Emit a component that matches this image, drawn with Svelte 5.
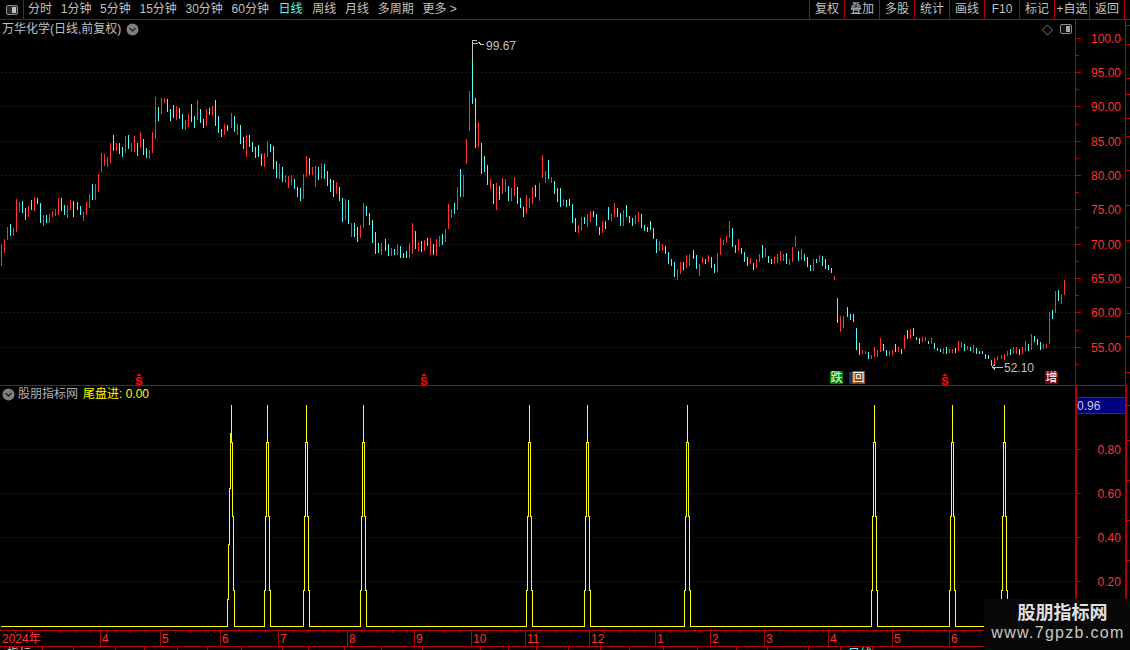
<script>
  const seg6 = "4 463 527 r,13 447 488 r,22 411 450 r,31 402 438 c,40 414 438 r,49 327 426 r,58 336 366 r,67 333 369 c,76 354 390 c,85 348 381 r,94 330 360 c,103 321 363 r,112 324 342 c,121 339 399 c,130 375 408 r,139 375 400 c,148 372 399 r,157 363 381 r,166 357 378 r,175 324 375 r,184 324 363 c,193 345 375 c,202 345 384 r,211 330 360 r,220 333 381 c,232 336 360 c,241 348 375 c,250 366 393 r,259 336 375 r,268 312 354 r,277 282 330 c,286 282 330 r,295 252 306 r,304 189 246 r,313 192 228 r,322 201 231 r,331 159 219 r,340 135 183 c,349 159 183 r,358 159 192 c,367 171 201 c,376 138 189 r,385 135 177 c,394 159 186 r,403 138 186 r,412 159 198 c,421 126 174 r,430 147 195 c,439 174 204 c,448 180 207 r,457 126 189 r,466 21 147 r,475 51 93 c,484 24 72 r,493 24 39 r,502 27 66 c,511 57 93 c,520 45 84 c,529 48 90 r,538 54 87 c,547 72 117 c,556 90 120 r,565 72 111 r,574 42 96 c,583 78 114 c,592 30 90 r,601 57 99 c,610 87 114 c,619 57 108 r,628 54 75 c,637 48 78 r,646 30 108 c,655 78 129 c,664 117 141 c,673 102 135 r,682 105 123 c,694 69 114 r,703 78 126 c,712 102 135 r";
  const seg7 = "1 285 342 c,10 321 357 c,19 315 381 r,28 315 351 c,37 336 366 c,46 351 384 c,55 345 381 c,64 372 408 c,73 369 411 r,82 333 381 r,91 342 366 c,100 348 417 c,109 393 444 c,118 402 447 r,127 411 456 c,136 435 459 r,145 438 474 r,154 435 465 r,163 447 477 c,172 471 501 c,181 474 513 c,190 432 507 r,199 378 441 r,208 384 435 c,217 411 435 r,226 408 471 r,235 411 450 c,244 399 447 r,253 402 447 c,262 423 468 c,271 447 486 c,280 450 501 c,289 456 492 r,298 471 513 c,307 504 576 c,316 507 570 r,325 510 582 c,334 579 621 r,343 579 621 c,352 591 636 c,361 585 624 r,370 519 594 r,379 528 558 c,388 549 585 c,397 570 639 c,406 606 672 c,415 639 669 c,424 639 675 r,436 627 663 c,445 642 678 c,454 654 678 r,463 657 675 c,472 642 675 r,481 648 684 c,490 669 684 c,499 663 684 c,508 639 684 r,517 579 672 r,526 603 657 c,535 636 663 r,544 633 666 c,553 630 663 r,562 624 648 c,571 624 675 r,580 642 675 c,589 627 678 r,598 618 651 r,607 612 645 c,616 597 636 r,625 522 597 r,634 537 564 r,643 519 552 c,652 471 540 r,661 417 501 c,670 435 501 r,679 327 402 r,688 183 303 r,697 30 222 c,706 204 354 c,715 276 351 r,724 339 432 c,733 378 426 c,742 405 465 c,751 447 477 r,760 462 522 c,769 459 540 r,778 468 510 c,787 444 492 r,796 447 486 r,805 468 513 c,814 474 513 r,823 441 498 r,832 471 522 c,841 504 534 c,850 531 561 c,859 495 552 r,868 504 534 r,877 471 522 r,886 465 501 c,898 459 513 r";
  const seg8 = "7 45 114 r,16 93 129 r,25 60 117 c,34 111 129 r,43 123 162 c,52 144 186 c,61 144 201 c,70 177 198 r,79 180 201 c,88 177 198 c,97 192 249 c,106 234 276 c,115 255 279 r,124 231 273 r,133 231 252 c,142 222 261 r,151 213 246 r,160 213 231 c,169 222 258 c,178 261 285 c,187 243 279 r,196 243 267 c,205 201 240 c,214 222 243 r,223 189 231 r,232 204 231 c,241 219 258 c,250 210 258 r,259 195 231 c,268 228 249 c,277 234 258 c,286 225 252 r,295 216 246 r,304 222 264 c,313 255 273 c,322 261 276 c,331 243 270 c,340 264 297 c,349 297 339 c,358 303 333 r,367 312 333 r,376 318 342 c,385 336 372 c,394 357 378 c,403 366 411 c,412 387 420 r,421 366 402 r,430 366 390 c,439 345 384 r,448 342 378 r,460 330 357 c,469 345 387 c,478 372 408 r,487 351 369 r,496 357 372 c,505 345 366 r,514 351 384 c,523 372 399 c,532 339 396 r,541 294 345 r,550 300 315 r,559 288 309 r,568 243 294 r,577 264 321 c,586 315 339 c,595 297 333 r,604 324 342 c,613 336 366 c,622 351 378 c,631 354 372 r,640 369 390 c,649 357 384 r,658 342 366 r,667 315 354 c,676 324 351 r,685 348 369 c,694 357 372 c,703 351 372 r,712 342 369 r,721 333 363 r,730 342 363 r,739 339 372 c,748 357 375 r,757 321 366 r,766 288 321 r,775 333 363 c,784 327 360 r,793 342 363 c,802 351 381 c,811 375 393 c,820 357 393 r,829 357 369 c,838 345 366 r,847 348 378 c,856 357 387 c,865 375 390 c,874 384 399 c,883 408 420 r";
  const seg9 = "52 84 159 c,61 138 186 r,70 138 174 r,82 111 141 c,91 132 150 c,100 132 156 c,109 174 240 c,118 219 255 c,127 240 252 r,136 243 252 r,145 246 267 c,154 255 267 r,163 231 261 r,172 240 261 r,181 204 246 r,190 222 243 c,199 240 258 c,208 243 258 r,217 240 255 r,226 222 246 c,235 231 246 r,244 237 252 c,253 195 237 r,262 180 207 c,271 177 207 r,280 174 198 c,289 201 210 c,298 204 222 c,307 201 216 r,316 201 213 r,325 213 222 c,334 204 222 r,343 219 237 c,352 234 243 c,361 237 246 c,370 234 252 r,379 231 252 c,388 237 249 r,397 237 249 r,406 234 249 c,415 213 243 r,424 216 234 r,433 222 243 c,442 228 240 r,451 231 243 c,460 225 249 r,469 234 252 c,478 243 252 c,487 243 252 c,496 252 267 c,505 255 267 c,514 270 288 c,523 264 285 r,532 258 270 r,544 255 267 r,553 252 270 r,562 243 258 r,571 237 255 c,580 231 252 r,589 231 252 r,598 237 255 c,607 231 252 r,616 213 243 r,625 222 243 c,634 192 240 r,643 198 216 c,652 207 225 c,661 216 240 c,670 222 237 r,679 222 234 r,688 126 222 r,697 120 147 c,706 63 129 r,715 60 93 c,724 72 102 r,733 30 75 r";

  function build(color) {
    const segs = [[seg6, 0, 90], [seg7, 240, 30], [seg8, 540, 140], [seg9, 820, 270]];
    let d = "";
    for (const [s, x0, y0] of segs) {
      for (const item of s.split(",")) {
        const [z, t, b, c] = item.split(" ");
        if (c !== color) continue;
        const x = Math.floor(x0 + z / 3) + 0.5;
        d += `M${x} ${Math.round(y0 + t / 3)}V${Math.round(y0 + b / 3)}`;
      }
    }
    return d;
  }
  const redPath = build("r");
  const cyanPath = build("c");

  const tabsLeft = [{ t: "分时" }, { t: "1分钟" }, { t: "5分钟" }, { t: "15分钟" }, { t: "30分钟" }, { t: "60分钟" }, { t: "日线", on: true }, { t: "周线" }, { t: "月线" }, { t: "多周期" }, { t: "更多 >" }];
  const tabsRight = ["复权", "叠加", "多股", "统计", "画线", "F10", "标记", "+自选", "返回"];

  const prices = [
    { y: 38.5, t: "100.0" }, { y: 72.5, t: "95.00" }, { y: 106.5, t: "90.00" }, { y: 141.5, t: "85.00" },
    { y: 175.5, t: "80.00" }, { y: 209.5, t: "75.00" }, { y: 244.5, t: "70.00" }, { y: 278.5, t: "65.00" },
    { y: 312.5, t: "60.00" }, { y: 347.5, t: "55.00" }
  ];
  const lower = [{ y: 449.5, t: "0.80" }, { y: 493.5, t: "0.60" }, { y: 537.5, t: "0.40" }, { y: 581.5, t: "0.20" }];
  const marks = [138, 423, 944];

  const centers = [267, 306, 363, 529, 587, 687, 874, 952, 1004];
  function spikePath() {
    const down = (c) => `V442H${c + 1.5}V516H${c + 2.5}V590H${c + 3.5}V626.5`;
    let d = "M1 626.5H227.5V599H228.5V544H229.5V488H230.5V433H231.5V405" + down(231);
    for (const c of centers) d += `H${c - 2.5}V590H${c - 1.5}V516H${c - 0.5}V442H${c + 0.5}V405` + down(c);
    return d + "H1075";
  }
  const spikes = spikePath();

  const months = [
    { x: 100, t: "4" }, { x: 160, t: "5" }, { x: 220, t: "6" }, { x: 278, t: "7" }, { x: 347, t: "8" },
    { x: 414, t: "9" }, { x: 471, t: "10" }, { x: 525, t: "11" }, { x: 589, t: "12" }, { x: 655, t: "1" },
    { x: 710, t: "2" }, { x: 764, t: "3" }, { x: 828, t: "4" }, { x: 892, t: "5" }, { x: 949, t: "6" }
  ];
  const minor = [];
  {
    const edges = [0, ...months.map((m) => m.x), 984];
    for (let i = 0; i < edges.length - 1; i++) {
      for (let x = edges[i] + 15; x < edges[i + 1] - 4; x += 15) minor.push(x);
    }
  }
  const tabSeps = [42, 73, 115, 144, 177, 207, 241, 282, 308, 344, 381, 422, 480, 508, 536, 568, 600, 629, 663, 697, 736, 767, 808, 840, 872];
  const sideTicks = [25, 44, 78, 94, 118, 136, 170, 205, 240, 287, 313, 336, 372, 405, 440, 480, 520, 560];
  const minorY = [55.5, 89.5, 124.5, 158.5, 192.5, 227.5, 261.5, 295.5, 330.5, 364.5];
</script>

<div class="app">
  <header class="toolbar">
    <div class="panel-btn">
      <svg width="14" height="12" viewBox="0 0 14 12">
        <rect x="1.5" y="1.5" width="11" height="9" rx="1.5" fill="#2a2a2a" stroke="#8a8a8a" />
        <rect x="7" y="3" width="4" height="6" fill="#bdbdbd" />
      </svg>
    </div>
    <nav class="periods">
      {#each tabsLeft as tab}
        <span class:on={tab.on}>{tab.t}</span>
      {/each}
    </nav>
    <nav class="actions">
      {#each tabsRight as tab}
        <span>{tab}</span>
      {/each}
    </nav>
  </header>

  <section class="pane upper">
    <div class="legend">
      <span>万华化学(日线,前复权)</span>
      <svg class="chev" width="13" height="13" viewBox="0 0 13 13">
        <circle cx="6.5" cy="6.5" r="6" fill="#7f7f7f" />
        <path d="M3.5 5l3 3 3-3" fill="none" stroke="#222" stroke-width="1.4" />
      </svg>
    </div>
    <svg class="plot" width="1130" height="366" viewBox="0 20 1130 366">
      <g class="crisp">
        {#each prices.slice(1) as p}
          <line class="grid" x1="1" x2="1075" y1={p.y} y2={p.y} />
        {/each}
        <path d={redPath} stroke="#ff3232" fill="none" />
        <path d={cyanPath} stroke="#54fcfc" fill="none" />

        <line class="axis" x1="1075.5" x2="1075.5" y1="20" y2="386" />
        <line class="axis" x1="1125.5" x2="1125.5" y1="20" y2="386" />
        <line class="axis" x1="0" x2="1127" y1="385.5" y2="385.5" />
        {#each prices as p}
          <line class="axis" x1="1076" x2="1081" y1={p.y} y2={p.y} />
        {/each}
        {#each minorY as y}
          <line class="axis" x1="1076" x2="1079" y1={y} y2={y} />
        {/each}
        {#each sideTicks as y}
          {#if y < 386}
            <line class="axis" x1="1126" x2="1130" y1={y + 0.5} y2={y + 0.5} />
          {/if}
        {/each}

        <path d="M472.5 60V40.5H477M472.5 43.5H476.5L479 42.5L481 44.5L484 44.5" stroke="#c0c0c0" fill="none" />
        <path d="M991.5 367H1003M995 364.5L992 367L995 369.5" stroke="#c0c0c0" fill="none" />
      </g>
      <text class="note" x="486" y="50">99.67</text>
      <text class="note" x="1004" y="372">52.10</text>

      {#each prices as p}
        <text class="price" x="1091" y={p.y + 4.5}>{p.t}</text>
      {/each}

      <g>
        <path d="M1047.5 25L1052.5 30L1047.5 35L1042.5 30Z" fill="none" stroke="#808080" />
        <rect x="1060.5" y="24.5" width="11" height="9" rx="1.5" fill="#111" stroke="#8a8a8a" />
        <rect x="1066" y="26" width="4" height="6" fill="#a8a8a8" />
      </g>

      {#each marks as x}
        <path d="M{x + 1} 373L{x + 3.5} 376H{x - 1.5}Z" fill="#ff0000" />
        <text class="smark" x={x + 1} y="384.5" text-anchor="middle">S</text>
      {/each}

      <rect x="830" y="371" width="13" height="13" fill="#007f00" />
      <text class="tag" x="836.5" y="382" text-anchor="middle">跌</text>
      <rect x="849" y="372" width="4" height="12" fill="#0a3a7a" />
      <rect x="852" y="371" width="13" height="13" fill="#8a4a18" />
      <text class="tag" x="858.5" y="382" text-anchor="middle">回</text>
      <rect x="1045" y="371" width="13" height="13" fill="#800000" />
      <text class="tag" x="1051.5" y="382" text-anchor="middle">增</text>
    </svg>
  </section>

  <section class="pane lower">
    <div class="legend low">
      <svg class="chev first" width="13" height="13" viewBox="0 0 13 13">
        <circle cx="6.5" cy="6.5" r="6" fill="#7f7f7f" />
        <path d="M3.5 5l3 3 3-3" fill="none" stroke="#222" stroke-width="1.4" />
      </svg>
      <span class="name">股朋指标网</span>
      <span class="val">尾盘进: 0.00</span>
    </div>
    <svg class="plot" width="1130" height="244" viewBox="0 386 1130 244">
      <g class="crisp">
        {#each lower as p}
          <line class="grid" x1="1" x2="1075" y1={p.y} y2={p.y} />
          <line class="axis" x1="1076" x2="1081" y1={p.y} y2={p.y} />
        {/each}
        <path d={spikes} stroke="#ffff00" fill="none" />
        <line class="axis wide" x1="1076" x2="1076" y1="386" y2="630" />
        <line class="axis wide" x1="1126" x2="1126" y1="386" y2="630" />
        {#each sideTicks as y}
          {#if y > 386}
            <line class="axis" x1="1127" x2="1130" y1={y + 0.5} y2={y + 0.5} />
          {/if}
        {/each}
        <rect x="1076.5" y="397.5" width="49" height="16" fill="#000080" stroke="#b40000" />
      </g>
      <text class="cursor" x="1077" y="410">0.96</text>
      {#each lower as p}
        <text class="price" x="1097.5" y={p.y + 4.5}>{p.t}</text>
      {/each}
    </svg>
  </section>

  <footer class="timeline">
    <svg width="1130" height="20" viewBox="0 630 1130 20">
      <g class="crisp">
        <line class="axis" x1="0" x2="984" y1="630.5" y2="630.5" />
        <line class="axis" x1="0" x2="984" y1="646.5" y2="646.5" />
        <line class="axis" x1="984.5" x2="984.5" y1="630" y2="647" />
        {#each minor as x}
          <line class="axis" x1={x + 0.5} x2={x + 0.5} y1="631" y2="633" />
        {/each}
        {#each months as m}
          <line class="axis" x1={m.x + 0.5} x2={m.x + 0.5} y1="630" y2="646" />
        {/each}
        {#each tabSeps as x}
          <line class="axis" x1={x + 0.5} x2={x + 0.5} y1="647" y2="650" />
        {/each}
      </g>
      <text class="month" x="2" y="643">2024年</text>
      {#each months as m}
        <text class="month" x={m.x + 2} y="643">{m.t}</text>
      {/each}
      <text class="peek" x="7" y="658">指标</text>
      <text class="peek" x="47" y="658">+</text>
      <text class="peek cy" x="848" y="658">日线</text>
    </svg>
  </footer>

  <aside class="stamp">
    <strong>股朋指标网</strong>
    <span>www.7gpzb.com</span>
  </aside>
</div>

<style>
  :global(body) {
    margin: 0;
    background: #000;
  }
  .app {
    position: relative;
    width: 1130px;
    height: 650px;
    overflow: hidden;
    display: flex;
    flex-direction: column;
    background: #000;
    font: 12px "Liberation Sans", "Noto Sans CJK SC", sans-serif;
    color: #c0c0c0;
  }
  .toolbar {
    flex: none;
    height: 19px;
    display: flex;
    align-items: stretch;
    border-bottom: 1px solid #b40000;
    line-height: 19px;
    white-space: nowrap;
  }
  .panel-btn {
    width: 23px;
    border-right: 1px solid #b40000;
    display: flex;
    align-items: center;
    justify-content: center;
  }
  .periods {
    display: flex;
    gap: 8.7px;
    padding-left: 4px;
    flex: 1;
  }
  .on {
    color: #54fcfc;
    margin: 0 1px;
  }
  .actions {
    display: grid;
    grid-template-columns: repeat(9, 35px);
    margin-right: 5px;
    border-left: 1px solid #b40000;
    box-sizing: border-box;
    width: 316px;
  }
  .actions span {
    text-align: center;
    border-right: 1px solid #b40000;
    box-sizing: border-box;
  }
  .pane {
    position: relative;
    flex: none;
  }
  .upper {
    height: 366px;
  }
  .lower {
    height: 244px;
  }
  .plot {
    display: block;
  }
  .legend {
    position: absolute;
    top: 2px;
    left: 2px;
    display: flex;
    align-items: center;
    gap: 5px;
    height: 15px;
    line-height: 15px;
  }
  .legend.low {
    top: 1px;
    left: 2px;
    gap: 0;
    z-index: 1;
  }
  .chev.first {
    margin-right: 3px;
  }
  .name {
    color: #b0b0b0;
    margin-right: 5px;
  }
  .val {
    color: #ffff00;
  }
  .crisp {
    shape-rendering: crispEdges;
  }
  .grid {
    stroke: #a00000;
    stroke-dasharray: 1 3;
  }
  .axis {
    stroke: #b40000;
  }
  .axis.wide {
    stroke-width: 2;
  }
  .price {
    fill: #ff3232;
    font-size: 12px;
  }
  .note {
    fill: #c0c0c0;
    font-size: 12px;
  }
  .cursor {
    fill: #c8c8e0;
    font-size: 12px;
  }
  .smark {
    fill: #ff0000;
    font-size: 11px;
    font-weight: 700;
    stroke: #ff0000;
    stroke-width: 0.3;
  }
  .tag {
    fill: #fff;
    font-size: 12px;
  }
  .month {
    fill: #ff3232;
    font-size: 12px;
  }
  .peek {
    fill: #d0d0d0;
    font-size: 12px;
  }
  .peek.cy {
    fill: #54fcfc;
  }
  .timeline {
    flex: none;
    height: 20px;
  }
  .timeline svg {
    display: block;
  }
  .stamp {
    position: absolute;
    left: 984px;
    top: 599px;
    width: 146px;
    height: 51px;
    background: #080808;
    display: flex;
    flex-direction: column;
    align-items: center;
    padding-top: 5px;
    box-sizing: border-box;
    line-height: 19px;
    color: #e0e0e0;
  }
  .stamp strong {
    font-size: 18px;
    font-weight: 700;
    margin-left: 11px;
  }
  .stamp span {
    font-size: 16px;
    letter-spacing: 1.3px;
    color: #c8c8c8;
    margin-left: 2px;
  }
</style>
